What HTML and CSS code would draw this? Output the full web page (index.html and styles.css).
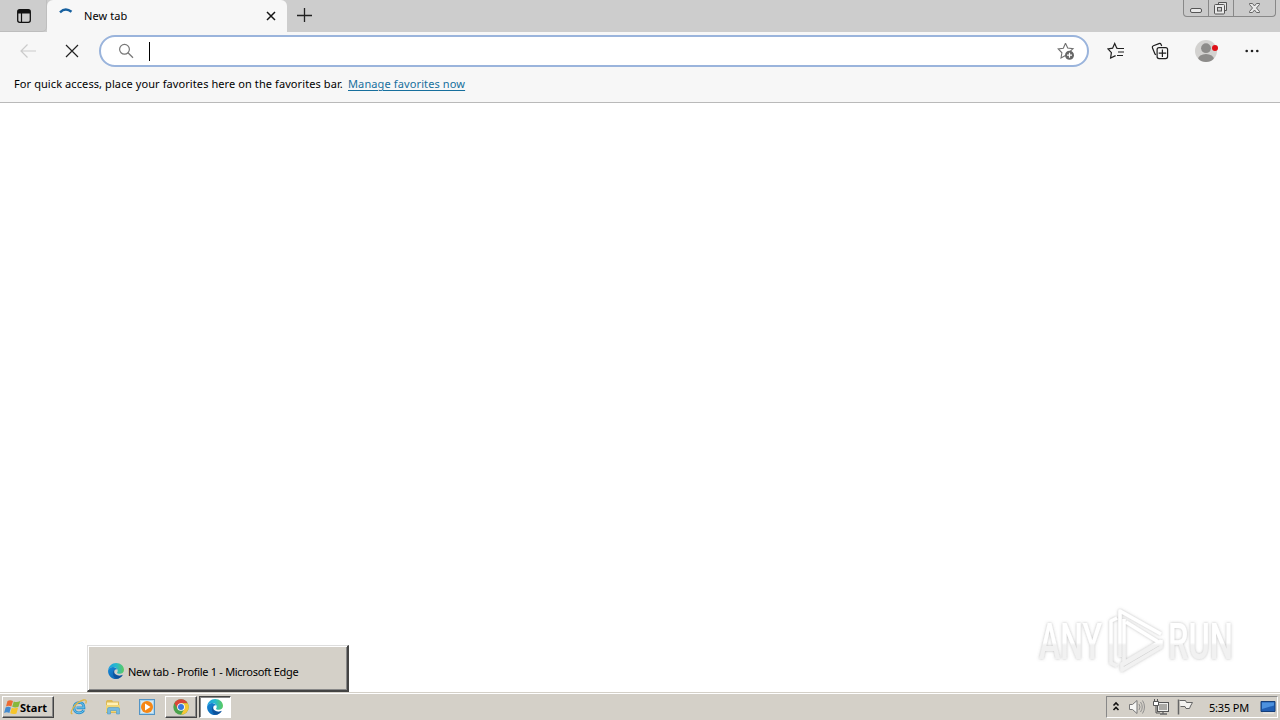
FILE: index.html
```html
<!DOCTYPE html>
<html lang="en">
<head>
<meta charset="utf-8">
<title>New tab</title>
<link rel="stylesheet" href="styles.css">
</head>
<body>
<svg width="0" height="0" class="defs">
  <defs>
    <linearGradient id="edgeTop" x1="0" y1="0.500" x2="1" y2="0.500"><stop offset="0" stop-color="#1a9fe0"/><stop offset=".5" stop-color="#27b9cf"/><stop offset="1" stop-color="#5ccb5c"/></linearGradient>
    <linearGradient id="edgeLow" x1="0" y1="0" x2="1" y2="1"><stop offset="0" stop-color="#1689d8"/><stop offset="1" stop-color="#0c5aa8"/></linearGradient>
    <symbol id="edge" viewBox="0 0 16 16">
      <path fill="url(#edgeLow)" d="M.1 7.500C.8 4.800 3.400 3.700 6 4.200c1.600.3 2.700 1.100 3.300 2-.8-.2-1.700 0-2.400.6-1.200 1.200-.9 3.300.5 4.500 2.100 1.800 4.900 1.700 7.400.5C13.500 14.300 11 16 8 16 3.400 16-.3 12 .1 7.500z"/>
      <path fill="#0b3f87" opacity=".55" d="M6.900 6.400c-2.600 1.500-3 6.300.7 9.200 3 .5 5.700-1 7.200-3.800-2.500 1.200-5.300 1.300-7.400-.5-1.400-1.200-1.700-3.300-.5-4.500z"/>
      <path fill="url(#edgeTop)" d="M.1 7.500C.5 3.200 3.900 0 8.100 0c4.600 0 7.900 3.300 7.900 6.800 0 2.500-1.800 4-4.100 4-1.800 0-2.900-.5-2.800-1.100.1-.5.600-.8.600-1.900 0-2-1.900-3.700-4.700-3.700C2.700 4.100.8 5.400.1 7.500z"/>
    </symbol>
  </defs>
</svg>
<div class="screen">
  <header class="tabstrip">
    <div class="tab-actions"><svg width="16" height="16" viewBox="0 0 16 16"><rect x="1.700" y="1.700" width="12.600" height="12.600" rx="2" fill="none" stroke="#111" stroke-width="1.300"/><path d="M2 2h12v3.500H2z" fill="#111"/><path d="M5.500 5v9" stroke="#111" stroke-width="1.200"/></svg></div>
    <div class="tab">
      <svg class="spinner" width="16" height="16" viewBox="0 0 16 16"><path d="M2 4.300Q7.500-1 13.500 3.800" fill="none" stroke="#17609f" stroke-width="2.400"/></svg>
      <span class="tab-title">New tab</span>
      <svg class="tab-close" width="10" height="10" viewBox="0 0 10 10"><path d="M1 1l8 8M9 1L1 9" stroke="#151515" stroke-width="1.500"/></svg>
    </div>
    <svg class="new-tab" width="16" height="16" viewBox="0 0 16 16"><path d="M8.500 1v14M1 8.500h15" stroke="#222" stroke-width="1.300"/></svg>
    <div class="window-buttons">
      <span class="wb wb-min"><svg width="24" height="17" viewBox="0 0 24 17"><rect x="6.500" y="8.500" width="11" height="4" rx="1.500" fill="#e8e8e8" stroke="#555"/></svg></span>
      <span class="wb wb-max"><svg width="24" height="17" viewBox="0 0 24 17"><path d="M9.500 4.500v-2h8v8h-2" fill="#e5e5e5" stroke="#555"/><rect x="5.500" y="4.500" width="10" height="9.500" rx="1" fill="#e8e8e8" stroke="#555"/><rect x="8.500" y="7.500" width="4" height="3.500" fill="#ccc" stroke="#555"/></svg></span>
      <span class="wb wb-close"><svg width="41" height="17" viewBox="0 0 41 17"><path d="M15.500 3.500h3l2 2.500 2-2.500h3v1L22.500 8l3 3.500v1h-3l-2-2.500-2 2.500h-3v-1l3-3.500-3-3.500z" fill="#e9e9e9" stroke="#666"/></svg></span>
    </div>
  </header>
  <nav class="toolbar">
    <svg class="back" width="18" height="16" viewBox="0 0 18 16"><path d="M17 8H2M8.500 1.500L2 8l6.500 6.500" fill="none" stroke="#cbcbcb" stroke-width="1.200"/></svg>
    <svg class="stop" width="14" height="14" viewBox="0 0 14 14"><path d="M1 1l12 12M13 1L1 13" stroke="#222" stroke-width="1.200"/></svg>
    <div class="address">
      <svg class="search" width="16" height="16" viewBox="0 0 16 16"><circle cx="6.500" cy="6.300" r="4.900" fill="none" stroke="#777" stroke-width="1.200"/><path d="M10 9.800l5 5" stroke="#777" stroke-width="1.300"/></svg>
      <span class="caret"></span>
      <svg class="add-fav" width="18" height="18" viewBox="0 0 18 18"><path d="M8.500 1.300l2.200 4.800 5.300.6-3.900 3.600M8.500 13.500L4 16l.9-5.200L1.200 6.900l5.100-.7 2.200-4.900" fill="none" stroke="#707070" stroke-width="1.100"/><circle cx="12.500" cy="13.200" r="4.500" fill="#666"/><path d="M12.500 10.700v5M10 13.200h5" stroke="#fff" stroke-width="1.200"/></svg>
    </div>
    <svg class="favorites" width="18" height="18" viewBox="0 0 18 18"><path d="M11 6.500L9.800 6.200 7.700 1.500 5.600 6.200 1 6.900l3.400 3.700L3.600 16l5-2.400M9.800 6.500H17M11 10h6M10 13.500h6" fill="none" stroke="#202020" stroke-width="1.200"/></svg>
    <svg class="collections" width="18" height="18" viewBox="0 0 18 18"><path d="M5 12.700l-1-.6-2.600-6.300q-.4-1.500 1-2.100L8 1.600q1.500-.5 2.100.9l.6 1.500" fill="none" stroke="#202020" stroke-width="1.200"/><rect x="6.100" y="5.600" width="10.500" height="11" rx="2" fill="none" stroke="#202020" stroke-width="1.200"/><path d="M11.400 7.500v7.500M7.700 11.200h7.500" stroke="#202020" stroke-width="1.200"/></svg>
    <svg class="profile" width="24" height="24" viewBox="0 0 24 24"><clipPath id="avatar"><circle cx="11" cy="12" r="11"/></clipPath><circle cx="11" cy="12" r="11" fill="#d3d2d0"/><g clip-path="url(#avatar)" fill="#8d8c8a"><circle cx="11" cy="9.200" r="4.900"/><ellipse cx="11" cy="20.500" rx="8" ry="5.500"/></g><circle cx="20" cy="9" r="3" fill="#df1017"/></svg>
    <svg class="more" width="14" height="4" viewBox="0 0 14 4"><g fill="#202020"><circle cx="1.700" cy="2" r="1.300"/><circle cx="7" cy="2" r="1.300"/><circle cx="12.300" cy="2" r="1.300"/></g></svg>
  </nav>
  <div class="favbar"><span class="fav-hint">For quick access, place your favorites here on the favorites bar.</span><span class="fav-link">Manage favorites now</span></div>
  <main class="page">
    <svg class="watermark" width="210" height="76" viewBox="0 0 210 76">
      <defs>
        <linearGradient id="wm" x1="0" y1="0" x2="0" y2="76" gradientUnits="userSpaceOnUse"><stop offset="0.510" stop-color="#fff"/><stop offset="0.540" stop-color="#f1f1f1"/></linearGradient>
        <filter id="glow" x="-10%" y="-20%" width="120%" height="140%"><feDropShadow dx="0" dy="0" stdDeviation="1.700" flood-color="#777" flood-opacity=".5"/></filter>
      </defs>
      <g filter="url(#glow)" fill="url(#wm)">
        <text x="8" y="55" font-size="50" textLength="63" lengthAdjust="spacingAndGlyphs">ANY</text>
        <text x="137" y="55" font-size="50" textLength="65" lengthAdjust="spacingAndGlyphs">RUN</text>
        <g fill="none" stroke="url(#wm)" stroke-width="3.500" stroke-linejoin="round"><path d="M89 53V7l41 23M95 18l34 21-36 21V15M86 14l-6 3v42l6 3M130 36v7L91 66v-6l39-23"/></g>
      </g>
    </svg>
    <div class="group-popup"><svg width="16" height="16"><use href="#edge"/></svg><span class="popup-title">New tab - Profile 1 - Microsoft Edge</span></div>
  </main>
  <footer class="taskbar">
    <div class="start"><svg width="17" height="16" viewBox="0 0 17 16"><path d="M3.500 2Q6 .3 9 2L7.300 7.500Q4.500 6 2 7.500z" fill="#ed6b32"/><path d="M9.800 2.500q3 1.200 6.500-.4L14.500 7.800q-3 1.400-6.300 0z" fill="#86b83c"/><path d="M1.600 8.400q2.500-1.500 5.300 0l-1.500 5.500q-2.500-1.500-5.300 0z" fill="#438bd0"/><path d="M7.800 8.800q3 1.200 6.300-.2l-1.600 5.900q-3 1.300-6.300-.2z" fill="#f6c52b"/></svg><b>Start</b></div>
    <svg class="quick ie" width="18" height="18" viewBox="0 0 18 18"><path d="M13.800 12.200Q12.300 14.900 9 14.900 4 14.700 4 9.600 4.300 4.700 9.200 4.500q4.900.3 4.800 5.300H6.500" fill="none" stroke="#2c91cd" stroke-width="2.700"/><path d="M13.800 12.200Q12.300 14.900 9 14.900 4 14.700 4 9.600 4.300 4.700 9.200 4.500q4.900.3 4.800 5.300H6.500" fill="none" stroke="#70c6ee" stroke-width="1"/><path d="M2.500 15.500C-1.500 17 4 4.500 13.500 2q4-.8 2.200 3.500" fill="none" stroke="#dfb545" stroke-width="1.300"/></svg>
    <svg class="quick explorer" width="18" height="18" viewBox="0 0 18 18"><path d="M2 3.500l1-1.500h5l1 1.500h6V15H2z" fill="#dcb955"/><path d="M3 4.500h11V8H3z" fill="#fff1b6"/><path d="M2 7h14v7H2z" fill="#efd576"/><path d="M3.500 16v-5q0-1.500 1.500-1.500h9q1.500 0 1.500 1.500v5h-3v-3.500h-6V16z" fill="#76b9df" stroke="#4f9bc7" stroke-width=".6"/></svg>
    <svg class="quick player" width="18" height="18" viewBox="0 0 18 18"><rect x="1.500" y="1.500" width="15" height="15" fill="#a7d4ef" stroke="#5394c5"/><path d="M3 3h12v12H3z" fill="#d8e9f2"/><circle cx="9" cy="9" r="6" fill="#f58716"/><path d="M7 5.500v7L12.500 9z" fill="#fff"/></svg>
    <div class="task chrome"><svg width="16" height="16" viewBox="0 0 16 16"><circle cx="8" cy="8" r="7.700" fill="#4ba34c"/><path d="M1.330 4.150A7.700 7.700 0 0 1 14.670 4.150H8L4.750 9.900z" fill="#da4638"/><path d="M14.670 4.150A7.700 7.700 0 0 1 8 15.700l3.250-5.800L8 4.150z" fill="#f6c735"/><circle cx="8" cy="8" r="3.850" fill="#fff"/><circle cx="8" cy="8" r="3" fill="#3978df"/></svg></div>
    <div class="task active"><svg width="16" height="16"><use href="#edge"/></svg></div>
    <div class="tray">
      <svg class="chevrons" width="8" height="12" viewBox="0 0 8 12"><path d="M1.500 4.500L4 2l2.500 2.500M1.500 9L4 6.500 6.500 9" fill="none" stroke="#111" stroke-width="1.600"/></svg>
      <svg class="sound" width="18" height="18" viewBox="0 0 18 18"><path d="M1.500 6.500h3l4.500-4v13l-4.500-4h-3z" fill="#f6f6f4" stroke="#777"/><path d="M11 6q2 3 0 6M12.500 4q3.500 5 0 10M14.500 2.500q4 6.500 0 13" fill="none" stroke="#888" stroke-width=".9"/></svg>
      <svg class="network" width="18" height="18" viewBox="0 0 18 18"><rect x="5.500" y="4.500" width="11" height="9" fill="#efefed" stroke="#555"/><path d="M7 6h8v6H7z" fill="#aaa9a5"/><path d="M8 16h7M11 14v2" stroke="#666" stroke-width="1.300"/><path d="M1.500 3.500h5v4h-5zM2.500 1v2M5.500 1v2M4 8v7h4" fill="none" stroke="#555"/><path d="M2 4h4v3H2z" fill="#fff"/></svg>
      <svg class="flag" width="18" height="18" viewBox="0 0 18 18"><path d="M3.500 2.500h6l1 2h6l-2 3.500-1 2.500H10l-1-2H4.500" fill="#f4f3f0" stroke="#666"/><path d="M2.500 1.500v15" stroke="#666" stroke-width="1.500"/></svg>
      <span class="clock">5:35 PM</span>
      <svg class="desktop" width="16" height="16" viewBox="0 0 16 16"><path d="M1 2.500h14v10H1z" fill="#205eb3" stroke="#153e79"/><path d="M2 3.500h12v3L2 10z" fill="#4c91de"/><path d="M3 14h11" stroke="#eee"/></svg>
    </div>
  </footer>
</div>
</body>
</html>
```
FILE: styles.css
```css
* { box-sizing: border-box; }
body { margin: 0; font-family: "Noto Sans", "Open Sans", sans-serif; color: #000; }
svg { display: block; flex: none; }
.defs { position: absolute; }
.screen { width: 1280px; height: 720px; display: flex; flex-direction: column; overflow: hidden; background: #fff; }
.tabstrip { height: 32px; flex: none; display: flex; background: #cdcdcd; }
.tab-actions { width: 47px; padding: 8px 0 0 16px; border-bottom: 1px solid #bdbdbd; border-right: 1px solid #bfbfbf; border-bottom-right-radius: 5px; }
.tab { width: 240px; display: flex; align-items: center; padding: 0 11px; border-radius: 6px 6px 0 0; background: #f7f7f7; }
.tab-title { width: 60px; margin-left: 10px; font-size: 11px; line-height: 16px; letter-spacing: .1px; }
.tab-close { margin-left: auto; }
.new-tab { margin: 7px 0 0 9px; }
.window-buttons { display: flex; height: 17px; margin: 0 4px 0 auto; border: 1px solid #888; border-top: 0; border-radius: 0 0 4px 4px; background: #cacaca; }
.wb { overflow: hidden; border-right: 1px solid #888; }
.wb-min { width: 25px; }
.wb-max { width: 25px; }
.wb-close { width: 41px; border-right: 0; }
.toolbar { height: 38px; flex: none; display: flex; align-items: center; padding-left: 19px; background: #f7f7f7; }
.stop { margin-left: 28px; }
.address { width: 990px; height: 32px; display: flex; align-items: center; margin-left: 20px; padding: 0 12px 0 17px; border: 2px solid #9ab4dc; border-radius: 16px; background: #fff; }
.caret { width: 1px; height: 19px; margin-left: 15px; background: #000; }
.add-fav { margin-left: auto; }
.favorites { margin-left: 18px; }
.collections { margin-left: 26px; }
.profile { margin-left: 26px; }
.more { margin-left: 26px; }
.favbar { height: 33px; flex: none; display: flex; padding: 6px 0 0 14px; border-bottom: 1px solid #b9b9b9; background: #f7f7f7; font-size: 11px; line-height: 16px; letter-spacing: .09px; white-space: nowrap; }
.fav-hint { width: 334px; }
.fav-link { color: #166f9d; letter-spacing: .12px; text-decoration: underline; text-underline-offset: 2px; }
.page { flex: 1; min-height: 0; display: flex; align-items: flex-end; position: relative; }
.watermark { position: absolute; right: 39px; bottom: 12px; overflow: visible; font-family: "Liberation Sans Narrow", Roboto, sans-serif; font-weight: 500; }
.group-popup { width: 262px; height: 47px; display: flex; align-items: center; margin-left: 87px; padding: 6px 0 0 20px; border: solid; border-width: 1px 2px 2px 1px; border-color: #ddd #444 #444 #ddd; box-shadow: inset 1px 1px #fff, inset -1px -1px #888; background: #d4d0c8; font-size: 11px; white-space: nowrap; }
.popup-title { margin-left: 4px; letter-spacing: -.3px; }
.taskbar { height: 28px; flex: none; display: flex; align-items: center; padding: 1px 2px 0; border-top: 1px solid #d4d0c8; box-shadow: inset 0 1px #fff; background: #d4d0c8; }
.start { width: 52px; height: 22px; display: flex; align-items: center; padding-left: 1px; border: 1px solid; border-color: #fff #444 #444 #fff; box-shadow: inset -1px -1px #888; font-size: 11px; }
.start b { margin-left: -1px; }
.ie { margin-left: 16px; }
.explorer { margin-left: 16px; }
.player { margin-left: 16px; }
.task { width: 32px; height: 22px; display: flex; align-items: center; justify-content: center; border: 1px solid; border-color: #fff #444 #444 #fff; box-shadow: inset -1px -1px #888; }
.chrome { margin-left: 9px; }
.active { margin-left: 2px; border-color: #444 #fff #fff #444; box-shadow: inset 1px 1px #888; background: #fff; }
.tray { width: 172px; height: 22px; display: flex; align-items: center; margin-left: auto; padding-left: 5px; border: 1px solid; border-color: #888 #fff #fff #888; }
.sound { margin-left: 8px; }
.network { margin-left: 6px; }
.flag { margin-left: 6px; }
.clock { width: 40px; margin-left: 15px; font-size: 11px; letter-spacing: -.2px; white-space: nowrap; }
.desktop { margin-left: 11px; }
```
